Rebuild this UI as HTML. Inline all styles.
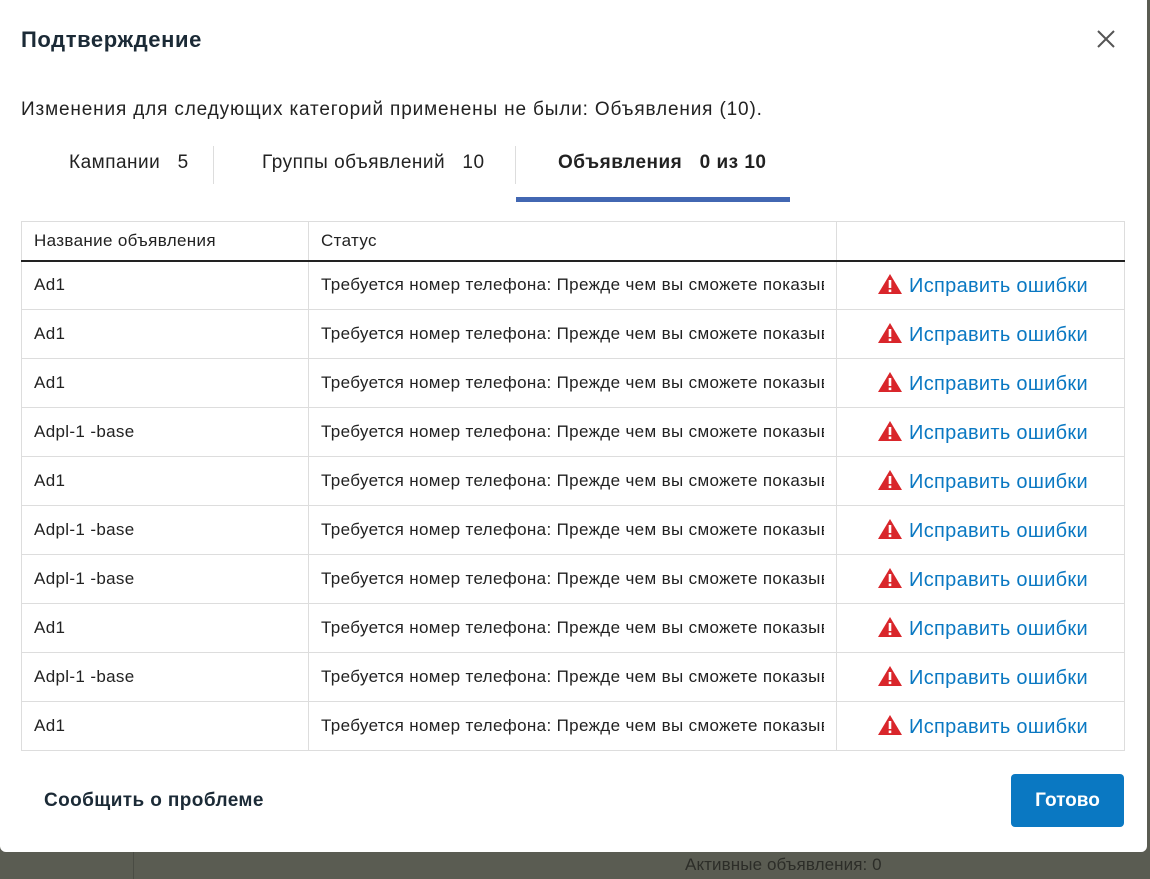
<!DOCTYPE html>
<html><head><meta charset="utf-8"><style>
*{margin:0;padding:0;box-sizing:border-box}
body{width:1150px;height:879px;background:#5a5c52;font-family:"Liberation Sans",sans-serif;position:relative;overflow:hidden;color:#222}
.bgline{position:absolute;left:133px;top:852px;width:1px;height:27px;background:#4a4c44}
.bgtxt{position:absolute;left:685px;top:855px;font-size:17px;color:#2c2d28;letter-spacing:0.1px}
.dlg{position:absolute;left:0;top:0;width:1147px;height:852px;background:#fff;border-radius:0 0 6px 6px}
.title{position:absolute;left:21px;top:27px;font-size:22px;font-weight:bold;color:#1b2a36;letter-spacing:0.6px}
.close{position:absolute;left:1096px;top:29px}
.desc{position:absolute;left:21px;top:99px;font-size:19px;color:#222;letter-spacing:0.85px;white-space:nowrap}
.tab{position:absolute;top:152px;font-size:19px;color:#222;white-space:pre;letter-spacing:0.5px}
.sep{position:absolute;top:146px;width:1px;height:38px;background:#ddd}
.ul{position:absolute;left:516px;top:197px;width:274px;height:5px;background:#4267b2}
table{position:absolute;left:21px;top:221px;width:1104px;border-collapse:collapse;font-size:17px;table-layout:fixed;letter-spacing:0.35px}
td{border:1px solid #ddd;height:49px;padding:0 12px;white-space:nowrap;overflow:hidden;color:#222}
td div{overflow:hidden;white-space:nowrap}
tr.h td{height:39px;border-bottom:2px solid #222}
td.c3{text-align:center;color:#0a78c2;font-size:20px;letter-spacing:0.3px;padding:0 0 0 4px}
.warn{display:inline-block;vertical-align:-3px;margin-right:6px}
.rep{position:absolute;left:44px;top:790px;font-size:19px;font-weight:bold;color:#1b2a36;letter-spacing:0.4px}
.btn{position:absolute;left:1011px;top:774px;width:113px;height:53px;background:#0a78c2;border-radius:4px;color:#fff;font-size:19px;font-weight:bold;text-align:center;line-height:53px}
</style></head><body>
<div class="bgline"></div><div class="bgtxt">Активные объявления: 0</div>
<div class="dlg">
<div class="title">Подтверждение</div>
<svg class="close" width="20" height="20" viewBox="0 0 20 20"><path d="M2 2L18 18M18 2L2 18" stroke="#555" stroke-width="2"/></svg>
<div class="desc">Изменения для следующих категорий применены не были: Объявления (10).</div>
<div class="tab" style="left:69px">Кампании   5</div>
<div class="sep" style="left:213px"></div>
<div class="tab" style="left:262px">Группы объявлений   10</div>
<div class="sep" style="left:515px"></div>
<div class="tab" style="left:558px;font-weight:bold">Объявления   0 из 10</div>
<div class="ul"></div>
<table>
<colgroup><col style="width:287px"><col style="width:528px"><col></colgroup>
<tr class="h"><td>Название объявления</td><td>Статус</td><td></td></tr>
<tr><td>Ad1</td><td><div>Требуется номер телефона: Прежде чем вы сможете показывать</div></td><td class="c3"><svg class="warn" width="26" height="22" viewBox="0 0 26 22"><path d="M13 1L25 21H1Z" fill="#d9262b"/><rect x="11.7" y="7" width="2.6" height="8" fill="#fff"/><rect x="11.7" y="16.5" width="2.6" height="2.6" fill="#fff"/></svg>Исправить ошибки</td></tr>
<tr><td>Ad1</td><td><div>Требуется номер телефона: Прежде чем вы сможете показывать</div></td><td class="c3"><svg class="warn" width="26" height="22" viewBox="0 0 26 22"><path d="M13 1L25 21H1Z" fill="#d9262b"/><rect x="11.7" y="7" width="2.6" height="8" fill="#fff"/><rect x="11.7" y="16.5" width="2.6" height="2.6" fill="#fff"/></svg>Исправить ошибки</td></tr>
<tr><td>Ad1</td><td><div>Требуется номер телефона: Прежде чем вы сможете показывать</div></td><td class="c3"><svg class="warn" width="26" height="22" viewBox="0 0 26 22"><path d="M13 1L25 21H1Z" fill="#d9262b"/><rect x="11.7" y="7" width="2.6" height="8" fill="#fff"/><rect x="11.7" y="16.5" width="2.6" height="2.6" fill="#fff"/></svg>Исправить ошибки</td></tr>
<tr><td>Adpl-1 -base</td><td><div>Требуется номер телефона: Прежде чем вы сможете показывать</div></td><td class="c3"><svg class="warn" width="26" height="22" viewBox="0 0 26 22"><path d="M13 1L25 21H1Z" fill="#d9262b"/><rect x="11.7" y="7" width="2.6" height="8" fill="#fff"/><rect x="11.7" y="16.5" width="2.6" height="2.6" fill="#fff"/></svg>Исправить ошибки</td></tr>
<tr><td>Ad1</td><td><div>Требуется номер телефона: Прежде чем вы сможете показывать</div></td><td class="c3"><svg class="warn" width="26" height="22" viewBox="0 0 26 22"><path d="M13 1L25 21H1Z" fill="#d9262b"/><rect x="11.7" y="7" width="2.6" height="8" fill="#fff"/><rect x="11.7" y="16.5" width="2.6" height="2.6" fill="#fff"/></svg>Исправить ошибки</td></tr>
<tr><td>Adpl-1 -base</td><td><div>Требуется номер телефона: Прежде чем вы сможете показывать</div></td><td class="c3"><svg class="warn" width="26" height="22" viewBox="0 0 26 22"><path d="M13 1L25 21H1Z" fill="#d9262b"/><rect x="11.7" y="7" width="2.6" height="8" fill="#fff"/><rect x="11.7" y="16.5" width="2.6" height="2.6" fill="#fff"/></svg>Исправить ошибки</td></tr>
<tr><td>Adpl-1 -base</td><td><div>Требуется номер телефона: Прежде чем вы сможете показывать</div></td><td class="c3"><svg class="warn" width="26" height="22" viewBox="0 0 26 22"><path d="M13 1L25 21H1Z" fill="#d9262b"/><rect x="11.7" y="7" width="2.6" height="8" fill="#fff"/><rect x="11.7" y="16.5" width="2.6" height="2.6" fill="#fff"/></svg>Исправить ошибки</td></tr>
<tr><td>Ad1</td><td><div>Требуется номер телефона: Прежде чем вы сможете показывать</div></td><td class="c3"><svg class="warn" width="26" height="22" viewBox="0 0 26 22"><path d="M13 1L25 21H1Z" fill="#d9262b"/><rect x="11.7" y="7" width="2.6" height="8" fill="#fff"/><rect x="11.7" y="16.5" width="2.6" height="2.6" fill="#fff"/></svg>Исправить ошибки</td></tr>
<tr><td>Adpl-1 -base</td><td><div>Требуется номер телефона: Прежде чем вы сможете показывать</div></td><td class="c3"><svg class="warn" width="26" height="22" viewBox="0 0 26 22"><path d="M13 1L25 21H1Z" fill="#d9262b"/><rect x="11.7" y="7" width="2.6" height="8" fill="#fff"/><rect x="11.7" y="16.5" width="2.6" height="2.6" fill="#fff"/></svg>Исправить ошибки</td></tr>
<tr><td>Ad1</td><td><div>Требуется номер телефона: Прежде чем вы сможете показывать</div></td><td class="c3"><svg class="warn" width="26" height="22" viewBox="0 0 26 22"><path d="M13 1L25 21H1Z" fill="#d9262b"/><rect x="11.7" y="7" width="2.6" height="8" fill="#fff"/><rect x="11.7" y="16.5" width="2.6" height="2.6" fill="#fff"/></svg>Исправить ошибки</td></tr>
</table>
<div class="rep">Сообщить о проблеме</div>
<div class="btn">Готово</div>
</div>
</body></html>
